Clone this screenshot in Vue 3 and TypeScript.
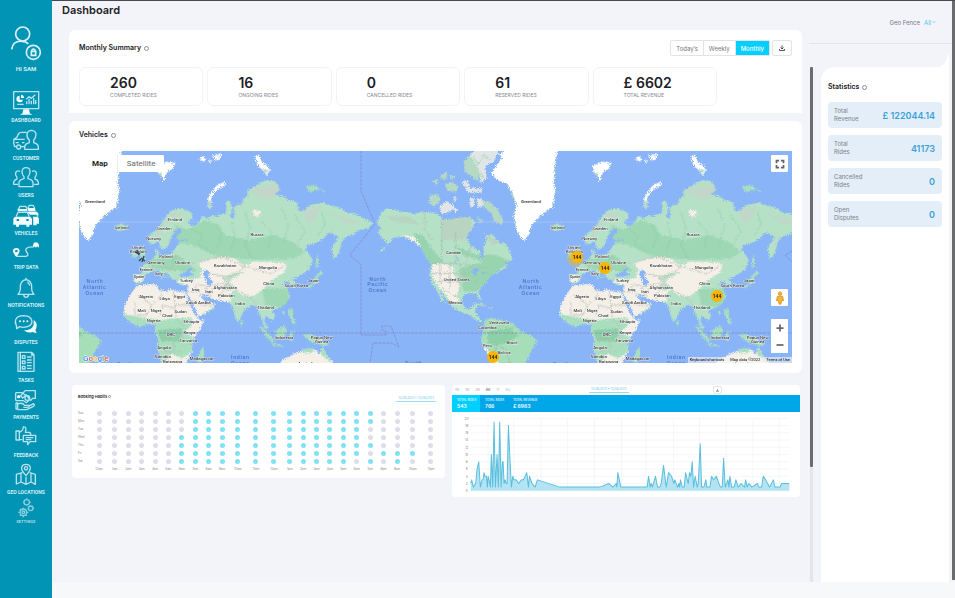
<script setup lang="ts">
import { ref } from 'vue'

interface NavItem {
  label: string
  box: string
  lines: string
  solid?: string
  kind?: 'short' | 'small'
}
interface MapLabel { x: number; y: number; text: string }

const ring = (x: number, y: number, r: number): string =>
  `M${x - r},${y}a${r},${r} 0 1 0 ${r * 2},0a${r},${r} 0 1 0 ${-r * 2},0Z`

const nav: NavItem[] = [
  {
    label: 'Dashboard',
    box: '33 273 90 75',
    lines: 'M41,275H116V326H41Z M80,313V304 M87,313V297 M94,313V302 M101,313V294 M107,313V300 M79,298L87,290L94,295L106,284 M52,313H71 M62,343H95',
    solid: 'M59,287A10,10 0 1 0 69,299H59Z M63,284A10,10 0 0 1 72,294H63Z M70,328H87L90,342H67Z',
  },
  {
    label: 'Customer',
    box: '33 387 90 75',
    lines: 'M74,440H62 M50,440H44Q39,430 42,417L50,413L56,401Q58,397 64,397H80 M42,418H74 M47,428H56 M66,428H73 '
      + ring(56, 441, 6)
      + ' M74,448V439Q76,431 88,428V421Q80,413 81,402Q84,391 95,391Q107,392 108,403Q108,414 101,421V428Q113,431 115,439V448Z',
  },
  {
    label: 'Users',
    box: '33 498 90 75',
    lines: 'M57,560V547Q59,539 72,536V530Q65,523 66,513Q68,503 78,503Q89,503 90,513Q91,523 84,530V536Q97,539 99,547V560Z M54,553H41V546Q43,539 51,537V532Q45,526 47,518Q51,510 60,514 M102,553H115V546Q113,539 105,537V532Q111,526 109,518Q105,510 96,514',
  },
  {
    label: 'Vehicles',
    box: '33 612 90 75',
    lines: 'M55,628L60,619H77L82,627 M84,624L88,616H99L104,624 M48,650L54,637H82L88,650 M86,638H108L114,650',
    solid: 'M53,627H82V634H53Z M83,624H105L107,634H85Z M40,656Q41,650 49,650H87Q96,651 96,659V674H88V680H79V674H57V680H48V674H40Z M50,657V663H57V657Z M79,657V663H86V657Z M99,650H112Q118,652 117,660V671H110V676H100Z M80,635H111L117,644H91Z',
  },
  {
    label: 'Trip Data',
    box: '33 24 90 75',
    lines: 'M51,79H76Q87,78 82,69Q74,60 80,55Q85,50 101,51',
    solid: 'M49,81Q38,69 39,62Q40,54 49,54Q58,54 59,63Q58,70 49,81Z M49,59A4,4 0 1 0 49,67A4,4 0 1 0 49,59Z M99,50Q98,38 108,37Q118,38 117,53L111,49L108,53Q103,48 99,50Z',
    kind: 'short',
  },
  {
    label: 'Notifications',
    box: '33 138 90 75',
    lines: 'M54,193Q62,186 61,169Q62,152 78,149Q94,152 95,169Q94,186 102,193Z M71,194Q72,202 78,202Q85,202 86,194 M78,149V143 M82,156Q88,160 89,167',
  },
  {
    label: 'Disputes',
    box: '33 249 90 75',
    lines: 'M49,286Q44,277 47,269Q52,257 71,257Q95,258 96,275Q95,290 72,292Q64,292 59,290L50,296Z',
    solid: 'M101,270Q111,276 110,289Q110,295 106,300L110,310L97,306Q83,311 72,301Q97,301 101,284Z ' + ring(60, 274, 3) + ring(71, 274, 3) + ring(82, 274, 3),
  },
  {
    label: 'Tasks',
    box: '33 363 90 75',
    lines: 'M54,367H61V424H54Z M61,367H95L102,374V424H61 M95,367V375H102 M67,377H75V385H67Z M67,393H75V401H67Z M67,409H75V417H67Z M81,381H95 M81,390H95 M81,398H95 M81,407H95 M81,415H95',
  },
  {
    label: 'Payments',
    box: '33 474 90 75',
    lines: 'M47,488H66L77,496 M48,512H71L79,518L87,511 M47,488V512 M75,482H106V505H98L91,512 M75,482L62,498L68,504L79,495L91,511 M48,519H53V537H48Z M53,522Q67,516 74,526H88Q90,532 80,532H70 M85,529L101,521Q106,525 99,530L80,539H53 ' + ring(82, 504, 7),
    solid: ring(56, 500, 5),
  },
  {
    label: 'Feedback',
    box: '33 588 90 75',
    lines: 'M48,603H58V630H48Z M58,607Q69,603 70,591Q77,589 78,598L76,607H89Q94,610 91,616 M58,629H67 M70,616H107V635H90L83,644V635H70Z M77,623H100 M77,629H94',
  },
  {
    label: 'Geo Locations',
    box: '33 699 90 75',
    lines: 'M78,737Q63,721 65,713Q66,703 78,703Q90,703 91,713Q92,721 78,737Z M67,728L49,733V762L63,756L78,763L93,756L106,763V733L89,728 M63,731V756 M78,740V763 M93,731V756 ' + ring(78, 715, 5),
  },
  {
    label: 'Settings',
    box: '33 801 90 66',
    lines: ring(70, 850, 10) + ring(70, 850, 4) + ring(80, 820, 8) + ring(92, 838, 7) + ' M70,836V840 M70,860V865 M55,850H60 M80,850H85 M60,840L63,843 M77,857L80,860 M60,860L63,857 M80,808V812 M69,820H72 M88,820H92 M99,838H102',
    kind: 'small',
  },
]

const summary = [
  { value: '260', label: 'COMPLETED RIDES' },
  { value: '16', label: 'ONGOING RIDES' },
  { value: '0', label: 'CANCELLED RIDES' },
  { value: '61', label: 'RESERVED RIDES' },
  { value: '£ 6602', label: 'TOTAL REVENUE' },
]
const periods = ['Today’s', 'Weekly', 'Monthly']
const period = ref('Monthly')
const mapType = ref('Map')
const fence = ref('All')

const stats = [
  { label: 'Total Revenue', value: '£ 122044.14' },
  { label: 'Total Rides', value: '41173' },
  { label: 'Cancelled Rides', value: '0' },
  { label: 'Open Disputes', value: '0' },
]

/* The world drawing repeats sideways; each half has its own origin */
const shifts = [-436, 0, 436]
const eastOrigin = -4
const westOrigin = 231

const eastLabels: MapLabel[] = [
  { x: 140, y: 252, text: 'Iceland' }, { x: 300, y: 229, text: 'Finland' }, { x: 267, y: 256, text: 'Sweden' },
  { x: 236, y: 285, text: 'Norway' }, { x: 190, y: 312, text: 'United' }, { x: 190, y: 324, text: 'Kingdom' },
  { x: 273, y: 339, text: 'Poland' }, { x: 243, y: 358, text: 'Germany' }, { x: 323, y: 358, text: 'Ukraine' },
  { x: 214, y: 377, text: 'France' }, { x: 251, y: 391, text: 'Italy' }, { x: 192, y: 399, text: 'Spain' },
  { x: 334, y: 412, text: 'Turkey' }, { x: 362, y: 439, text: 'Iraq' }, { x: 402, y: 445, text: 'Iran' },
  { x: 546, y: 274, text: 'Russia' }, { x: 450, y: 365, text: 'Kazakhstan' }, { x: 579, y: 373, text: 'Mongolia' },
  { x: 581, y: 419, text: 'China' }, { x: 664, y: 425, text: 'South Korea' }, { x: 716, y: 412, text: 'Japan' },
  { x: 451, y: 433, text: 'Afghanistan' }, { x: 454, y: 456, text: 'Pakistan' }, { x: 495, y: 481, text: 'India' },
  { x: 572, y: 492, text: 'Thailand' }, { x: 213, y: 459, text: 'Algeria' }, { x: 269, y: 464, text: 'Libya' },
  { x: 314, y: 459, text: 'Egypt' }, { x: 370, y: 477, text: 'Saudi Arabia' }, { x: 200, y: 500, text: 'Mali' },
  { x: 243, y: 500, text: 'Niger' }, { x: 317, y: 503, text: 'Sudan' }, { x: 277, y: 516, text: 'Chad' },
  { x: 236, y: 531, text: 'Nigeria' }, { x: 349, y: 535, text: 'Ethiopia' }, { x: 343, y: 566, text: 'Kenya' },
  { x: 288, y: 572, text: 'DRC' }, { x: 340, y: 590, text: 'Tanzania' }, { x: 267, y: 612, text: 'Angola' },
  { x: 263, y: 638, text: 'Namibia' }, { x: 293, y: 653, text: 'Botswana' }, { x: 380, y: 646, text: 'Madagascar' },
  { x: 627, y: 582, text: 'Indonesia' }, { x: 740, y: 583, text: 'Papua New' }, { x: 740, y: 595, text: 'Guinea' },
  { x: 695, y: 660, text: 'Australia' },
]
const eastSeas: MapLabel[] = [
  { x: 60, y: 415, text: 'North' }, { x: 59, y: 432, text: 'Atlantic' }, { x: 59, y: 449, text: 'Ocean' },
  { x: 152, y: 662, text: 'South' }, { x: 496, y: 642, text: 'Indian' }, { x: 496, y: 659, text: 'Ocean' },
]
const westLabels: MapLabel[] = [
  { x: 663, y: 173, text: 'Greenland' }, { x: 430, y: 328, text: 'Canada' }, { x: 440, y: 408, text: 'United States' },
  { x: 436, y: 476, text: 'Mexico' }, { x: 567, y: 536, text: 'Venezuela' }, { x: 532, y: 552, text: 'Colombia' },
  { x: 606, y: 597, text: 'Brazil' }, { x: 532, y: 606, text: 'Peru' }, { x: 582, y: 628, text: 'Bolivia' },
]
const westSeas: MapLabel[] = [
  { x: 203, y: 407, text: 'North' }, { x: 203, y: 424, text: 'Pacific' }, { x: 203, y: 441, text: 'Ocean' },
  { x: 311, y: 661, text: 'South' },
]
/* Keeps only the labels whose middle falls inside the map */
const visible = (list: MapLabel[], origin: number, shift: number): MapLabel[] =>
  list.filter((l) => {
    const x = origin + shift + l.x / 3
    return x > 12 && x < 701
  })
const clusters = [{ x: 498, y: 106 }, { x: 526, y: 117 }, { x: 638, y: 145 }, { x: 414, y: 206 }]

/* One string per day, one character per hour; 1 marks an hour with bookings */
const days = [
  { name: 'Sun', hours: '000000011111111111110000' },
  { name: 'Mon', hours: '000000011111111111110000' },
  { name: 'Tue', hours: '000000011111111111100000' },
  { name: 'Wed', hours: '000000111111111111100000' },
  { name: 'Thu', hours: '000000111111111111110000' },
  { name: 'Fri', hours: '000000111111111111101110' },
  { name: 'Sat', hours: '000000111111111111010100' },
]
const hourNames = Array.from({ length: 24 }, (_, h) => `${h % 12 === 0 ? 12 : h % 12}${h < 12 ? 'am' : 'pm'}`)
const isWide = (h: number): boolean => hourNames[h].length === 4

const series: [number, number][] = [
  [78, 2], [81, 3], [86, 1], [93, 2], [97, 6], [102, 8], [107, 1], [112, 3], [115, 3], [118, 5], [121, 4], [125, 4],
  [128, 1], [130, 4], [133, 3], [137, 1], [140, 10], [144, 1], [148, 19], [152, 1], [157, 10], [161, 1], [165, 19],
  [169, 1], [173, 8], [175, 8], [178, 2], [181, 3], [184, 2], [187, 2], [191, 18], [196, 8], [200, 1], [204, 4],
  [207, 3], [214, 3], [222, 2], [230, 3], [236, 3], [246, 5], [251, 1], [254, 4], [262, 2], [271, 1], [278, 3],
  [345, 1], [465, 1], [492, 2], [504, 1], [514, 2], [516, 1], [519, 5], [528, 1], [607, 1], [611, 4], [616, 1],
  [619, 2], [623, 1], [632, 4], [638, 1], [645, 1], [649, 2], [656, 7], [664, 1], [671, 5], [680, 4], [687, 2],
  [690, 3], [698, 1], [702, 2], [704, 1], [707, 3], [712, 1], [718, 1], [722, 5], [730, 2], [734, 5], [738, 4],
  [742, 8], [746, 1], [751, 4], [757, 1], [760, 2], [766, 13], [770, 1], [777, 1], [783, 3], [786, 1], [795, 1],
  [800, 4], [806, 3], [814, 4], [822, 2], [827, 1], [832, 1], [836, 9], [841, 1], [849, 3], [852, 1], [855, 4],
  [860, 1], [868, 1], [873, 3], [880, 1], [888, 2], [899, 1], [902, 3], [907, 1], [912, 2], [921, 1], [937, 2],
  [942, 1], [950, 1], [955, 4], [962, 3], [974, 1], [985, 3], [990, 1], [1003, 1], [1005, 1], [1010, 2], [1033, 2],
]
const yOf = (v: number): number => 347 - v * 10.85
const line = 'M' + series.map(([x, v]) => `${x},${yOf(v)}`).join('L')
const area = `${line}L1033,347L78,347Z`
const ticks = [0, 2, 4, 6, 8, 10, 12, 14, 16, 18, 20]
const gridX = [130, 207, 289, 368, 449, 530, 604, 686, 764, 844, 924, 1003]
const ranges = ['1W', '1M', '3M', '6M', '1Y', 'ALL']
const rangeOn = ref('6M')
const totals = [
  { label: 'TOTAL RIDES', value: '543' },
  { label: 'TOTAL RIDES', value: '766' },
  { label: 'TOTAL REVENUE', value: '£ 6963' },
]
</script>

<template>
  <div class="app">
    <aside class="sidebar">
      <div class="user">
        <svg class="avatar" viewBox="27 72 102 114" aria-hidden="true">
          <circle cx="68" cy="102" r="21" />
          <path d="M35 148Q38 122 66 124Q78 124 85 132" />
          <circle cx="100" cy="157" r="21" />
          <path d="M94 154H107V166H94ZM96 154V150Q100 144 105 150V154" />
        </svg>
        <span>HI SAM</span>
      </div>
      <nav>
        <ul>
          <li v-for="n in nav" :key="n.label" :class="n.kind">
            <a href="#">
              <svg :viewBox="n.box" aria-hidden="true">
                <path :d="n.lines" class="lines" />
                <path v-if="n.solid" :d="n.solid" class="solid" />
              </svg>
              <span>{{ n.label }}</span>
            </a>
          </li>
        </ul>
      </nav>
    </aside>

    <div class="page">
      <div class="body">
        <main>
          <h1>Dashboard</h1>

          <section class="panel summary">
            <header>
              <h2>Monthly Summary <i class="info"></i></h2>
              <div class="tools">
                <div class="segments">
                  <button v-for="p in periods" :key="p" type="button" :class="{ on: p === period }" @click="period = p">{{ p }}</button>
                </div>
                <button class="download" type="button" aria-label="Download">
                  <svg viewBox="0 0 12 12"><path d="M6 1V8M3 5L6 8L9 5M1 8V11H11V8" /></svg>
                </button>
              </div>
            </header>
            <div class="cards">
              <article v-for="s in summary" :key="s.label">
                <strong>{{ s.value }}</strong>
                <span>{{ s.label }}</span>
              </article>
            </div>
          </section>

          <section class="panel vehicles">
            <h2>Vehicles <i class="info"></i></h2>
            <div class="map">
              <svg class="world" viewBox="0 0 713 212" preserveAspectRatio="xMidYMid slice" aria-hidden="true">
                <defs>
                  <filter id="coast" x="-5%" y="-5%" width="110%" height="110%">
                    <feTurbulence type="fractalNoise" baseFrequency="0.28" numOctaves="3" seed="4" result="n" />
                    <feDisplacementMap in="SourceGraphic" in2="n" scale="16" xChannelSelector="R" yChannelSelector="G" />
                  </filter>
                  <clipPath id="euClip"><use href="#eurasia" /></clipPath>
                  <clipPath id="afClip"><use href="#africa" /></clipPath>
                  <clipPath id="naClip"><use href="#northam" /></clipPath>
                  <path id="eurasia" d="M175,387L200,387L203,378L195,368L205,360L218,352L228,345L238,335L243,325L240,316L247,312L252,320L250,330L262,332L275,330L290,325L297,315L303,305L312,300L310,292L325,288L340,285L335,281L308,285L305,275L318,262L322,255L312,250L300,258L292,270L286,282L282,298L270,312L262,315L254,302L250,288L238,297L224,295L218,280L225,268L245,255L262,232L275,210L292,195L315,190L335,195L350,205L353,220L338,230L350,242L365,240L375,225L385,212L395,222L410,212L425,215L440,208L450,208L455,190L452,175L460,165L468,175L470,200L465,215L475,222L480,205L475,190L485,180L500,178L505,160L520,150L515,138L545,120L575,105L605,112L616,135L600,150L630,155L640,165L665,170L672,200L690,195L705,180L745,173L767,182L790,186L817,203L835,205L850,212L895,235L880,250L850,255L838,268L812,275L800,290L792,325L776,345L770,310L782,290L790,275L765,262L735,288L712,298L695,300L692,315L708,335L712,355L700,375L685,385L670,395L652,402L660,412L665,425L655,428L645,415L635,408L622,415L638,430L645,455L635,475L615,490L595,492L592,500L600,510L595,525L580,520L572,510L568,530L578,545L576,555L565,540L560,520L550,500L545,485L530,480L515,490L502,505L492,532L482,520L475,495L468,478L455,470L430,467L405,460L392,450L380,445L395,470L420,476L415,492L390,507L366,516L355,490L340,465L335,447L340,432L340,420L320,422L305,412L302,402L292,405L283,392L270,382L262,378L275,398L266,394L252,380L240,376L225,382L212,388L208,405L195,415L178,412Z" />
                  <path id="africa" d="M185,422L215,418L245,418L250,432L275,440L285,432L310,440L330,440L338,455L350,490L365,515L375,525L390,524L375,552L355,580L350,600L352,620L336,645L332,670L265,670L255,640L248,610L250,580L240,560L242,542L225,535L190,545L165,530L145,510L148,485L165,450Z" />
                  <path id="northam" d="M200,235L212,205L230,190L265,198L310,206L345,200L380,205L400,225L440,220L480,215L495,230L490,245L470,275L480,300L510,320L513,340L522,335L520,310L530,285L525,270L550,270L570,295L585,290L600,320L607,345L580,355L595,362L575,375L555,385L540,395L530,410L515,425L505,440L516,465L508,466L500,445L480,445L460,450L455,470L465,490L480,492L490,480L502,480L495,500L505,515L518,530L505,530L480,510L455,502L430,490L415,470L400,450L388,430L398,455L408,475L395,468L380,435L365,415L358,385L365,360L350,340L335,310L310,288L280,275L250,280L215,320L205,322L237,297L220,285L205,265L212,250Z" />
                  <g id="east">
                    <use href="#eurasia" fill="#b5e2c7" />
                    <g clip-path="url(#euClip)">
                      <path fill="#97d4ae" d="M300,240L340,255L390,225L430,240L450,270L520,285L600,270L650,290L690,320L660,340L560,345L430,335L350,300L290,290ZM560,430L640,430L640,490L570,480ZM200,350L310,330L370,380L250,375Z" opacity=".8" />
                      <path fill="#c2d7c9" d="M520,135L620,115L610,150L580,165L545,150ZM530,190L560,200L550,222L530,212ZM680,200L740,180L720,220L700,235ZM760,200L850,230L820,240ZM245,260L290,205L340,200L285,225L240,290Z" />
                      <path fill="#f4efe7" d="M368,352L400,344L440,335L475,340L510,362L535,350L590,350L636,356L628,380L598,402L580,410L565,432L535,455L500,450L478,432L462,452L470,470L430,470L392,452L380,445L425,478L365,520L330,440L338,418L305,412L315,402L350,404L375,400L382,375ZM178,392L205,392L198,412L178,410ZM535,195L558,198L552,218L535,210Z" />
                      <path fill="#a5d9b9" d="M440,400L470,385L510,380L480,395L462,412ZM440,425L462,412L480,425L460,440Z" opacity=".7" />
                      <path fill="none" stroke="#8fcfa9" stroke-width="2" d="M345,250L380,270L370,300L410,320M420,235L440,270L425,310M470,230L480,280L465,320M510,200L525,250L510,300L530,340M560,230L590,260L580,310M620,190L640,240L625,300M660,210L690,260L665,300M740,200L750,240L730,270M255,335L260,370M300,330L290,370" />
                      <path fill="none" stroke="#b8b8b4" stroke-width="2" d="M370,352L440,335L510,365L590,385L636,357M510,365L470,395L440,392L395,385M440,392L455,415L480,432M395,425L430,418L455,415L430,467M405,458L412,430M480,432L530,458L545,485M545,485L590,490M228,345L235,380M262,332L265,365L300,375M300,325L310,350L360,355M335,440L365,440L362,420L390,420L400,455M340,465L380,480L415,480" />
                    </g>
                    <use href="#africa" fill="#f4efe7" />
                    <g clip-path="url(#afClip)">
                      <path fill="#a9dfbe" d="M140,505L200,518L260,525L300,520L350,518L350,540L330,560L360,580L350,620L320,640L290,625L270,650L240,640L230,560L150,545Z" />
                      <path fill="#8dcfa7" d="M245,555L320,550L315,590L260,590Z" />
                      <path fill="none" stroke="#b8b8b4" stroke-width="2" d="M190,450L230,480L262,450L255,430M230,480L215,510M262,480L300,490L295,440M300,480H345M300,490L305,525L330,545M262,480L255,515M180,470V510H215M250,580H290L300,610M320,550V580L350,600M265,620H320" />
                    </g>
                    <path fill="#8ab4f8" d="M312,388L330,382L345,368L352,374L345,382L362,392L340,394L318,396ZM388,376L402,376L400,394L412,408L405,426L396,418L392,402L384,388ZM332,442L340,450L368,505L365,516L350,492ZM372,445L385,455L398,466L390,470Z" />
                    <path fill="#a9dfbe" d="M120,243L140,235L158,243L150,255L130,258ZM192,325L198,300L210,305L204,320L214,332L210,342L192,345L200,335ZM172,322L188,318L186,336L172,338ZM372,622L385,605L388,628L377,655L367,650ZM552,540L575,558L600,590L590,592L568,568ZM600,560L625,540L638,555L625,580L605,578ZM590,594L625,600L622,605L590,600ZM645,560L662,558L650,570L656,590L646,585ZM682,568L700,566L730,578L765,600L745,602L705,590ZM642,490L655,492L652,510L664,535L654,538L642,512ZM622,498L632,503L625,510ZM497,525L505,535L498,545ZM694,426L715,415L722,392L736,378L745,384L730,396L728,412L706,428ZM722,340L730,330L730,362L724,370ZM692,125L720,120L735,132L705,142ZM740,132L752,138L745,142ZM255,398L265,398L262,404Z" />
                    <path fill="#f4efe7" d="M610,670L620,645L650,630L675,620L695,609L720,613L735,628L742,604L755,630L772,650L778,670Z" />
                    <path fill="#a9dfbe" d="M675,622L695,609L718,613L710,624ZM738,628L742,604L755,630L770,655L752,640Z" />
                    <path fill="#fff" d="M245,62L275,50L302,55L292,72L276,82L266,112L258,90L248,85ZM370,40L385,34L395,42L385,50ZM400,44L408,46L404,54ZM412,32L440,28L436,40L420,46ZM540,35L552,28L560,50L572,58L585,75L576,90L558,70L550,65ZM397,180L402,150L425,122L448,110L452,118L424,136L408,158L411,188L402,192Z" />
                    <path fill="#b5d9c4" d="M248,85L262,82L260,94ZM560,72L582,76L576,86ZM397,168L407,165L411,188L400,192Z" />
                  </g>
                  <g id="west">
                    <use href="#northam" fill="#b5e2c7" />
                    <g clip-path="url(#naClip)">
                      <path fill="#92d1aa" d="M310,265L340,270L365,310L400,350L362,360L330,310ZM430,300L500,330L560,330L600,350L560,380L500,440L460,440L450,370L520,350L460,330Z" opacity=".8" />
                      <path fill="#b9d4c1" d="M390,222L480,215L490,250L460,285L400,285ZM525,268L570,290L585,295L545,300ZM230,212L300,215L330,240L250,230Z" />
                      <path fill="#f4efe7" d="M365,360L395,355L430,365L435,395L450,420L440,450L450,480L425,470L390,430L368,400ZM275,268L310,275L335,305L310,290Z" />
                      <path fill="none" stroke="#aab9b0" stroke-width="2" d="M345,200V255L370,290M365,355H460L500,370L540,365M395,230V350M437,260V355M485,300L465,355M395,430L440,455M390,355V420M420,355V430M450,355V440M365,385H480M370,410H500" />
                      <path fill="#8ab4f8" d="M485,375L500,368L508,376L498,380L502,392L495,392ZM512,385L528,378L526,386ZM440,330L446,345L442,348Z" />
                    </g>
                    <path fill="#a6deba" d="M525,525L545,518L575,525L610,535L630,558L670,575L681,590L665,615L655,640L630,670L555,670L550,640L525,615L513,585L520,555Z" />
                    <path fill="#8dcfa7" d="M530,560L600,550L625,570L600,590L560,600L535,595Z" />
                    <path fill="#f4efe7" d="M517,590L532,615L556,635L575,670H555L548,642L524,615Z" />
                    <path fill="none" stroke="#9db8a8" stroke-width="2" d="M525,560L560,565L570,540L610,550M560,600L590,615L600,660M535,600L560,600L550,635" />
                    <path fill="#b5d9c4" d="M490,475L515,474L530,482L505,482ZM532,486L548,488L542,493ZM358,150L385,148L392,165L375,185L358,175ZM365,108L385,104L380,120ZM390,90L412,80L410,100L395,104ZM420,90L435,95L425,105ZM405,120L425,112L445,125L440,140L415,138ZM460,50L490,20L510,55L505,110L480,90L465,80ZM515,165L540,170L565,195L580,225L575,240L550,228L545,205L520,185ZM500,215L520,225L512,235Z" />
                    <path fill="#e0e5e6" d="M480,30L500,12L570,12L550,50L525,65L530,100L512,115L505,70ZM388,185L410,168L425,178L435,190L410,205L392,205ZM430,150L440,160L432,172ZM455,110L470,105L480,128L516,130L515,142L475,144ZM478,160L492,158L495,180L482,188ZM500,160L515,162L520,180L505,190ZM430,185L445,195L435,205Z" />
                    <path fill="none" stroke="#b5d9c4" stroke-width="4" d="M490,35L505,60L520,30L540,45M510,80L520,100" />
                    <path fill="#fff" d="M545,85L560,60L575,40L568,28L600,10L745,10L735,60L732,110L736,140L728,185L700,205L680,225L665,240L655,270L645,287L630,275L618,250L612,210L620,180L605,140L590,115L560,105Z" />
                    <path fill="none" stroke="#b5d9c4" stroke-width="3" stroke-dasharray="7 5" d="M592,122L606,142L618,180L612,212L618,250L630,275M735,60L732,110L736,140L728,185L700,205L680,225" />
                  </g>
                </defs>
                <rect width="713" height="212" fill="#8ab4f8" />
                <path d="M0 71H713" stroke="#9cc0fb" />
                <g v-for="shift in shifts" :key="shift" :transform="`translate(${shift} 0)`">
                  <g transform="translate(231 -6) scale(.33333)">
                    <use href="#west" filter="url(#coast)" />
                    <text v-for="l in visible(westLabels, westOrigin, shift)" :key="l.text" :x="l.x" :y="l.y" class="place">{{ l.text }}</text>
                    <text v-for="(l, i) in visible(westSeas, westOrigin, shift)" :key="i" :x="l.x" :y="l.y" class="sea">{{ l.text }}</text>
                  </g>
                </g>
                <g v-for="shift in shifts" :key="'e' + shift" :transform="`translate(${shift} 0)`">
                  <g transform="translate(-4 -6) scale(.33333)">
                    <use href="#east" filter="url(#coast)" />
                    <text v-for="l in visible(eastLabels, eastOrigin, shift)" :key="l.text" :x="l.x" :y="l.y" class="place">{{ l.text }}</text>
                    <text v-for="(l, i) in visible(eastSeas, eastOrigin, shift)" :key="i" :x="l.x" :y="l.y" class="sea">{{ l.text }}</text>
                  </g>
                </g>
                <path class="dateline" d="M282 0V40L296 73L271 104L282 114V184H307V180L303 179V175H312L320 196L312 192H294L291 212M713 100L706 104L713 111M0 182H713" />
                <path fill="none" stroke="#3a4650" stroke-width="1.4" d="M56 101L61 103M58 99L60 104M62 107L66 110M65 105L63 111M60 110L62 108" />
                <circle cx="496" cy="108" r="8" fill="#f7b500" opacity=".35" />
                <g v-for="c in clusters" :key="c.x">
                  <circle :cx="c.x" :cy="c.y" r="6" fill="#fbb400" />
                  <text :x="c.x" :y="c.y + 2" class="count">144</text>
                </g>
                <text x="4" y="210" class="logo"><tspan fill="#4285f4">G</tspan><tspan fill="#ea4335">o</tspan><tspan fill="#fbbc05">o</tspan><tspan fill="#4285f4">g</tspan><tspan fill="#34a853">l</tspan><tspan fill="#ea4335">e</tspan></text>
              </svg>
              <div class="types">
                <button v-for="t in ['Map', 'Satellite']" :key="t" type="button" :class="{ on: t === mapType }" @click="mapType = t">{{ t }}</button>
              </div>
              <div class="controls">
                <button type="button" aria-label="Full screen">
                  <svg viewBox="0 0 16 16"><path d="M4 7V4H7M9 4H12V7M12 9V12H9M7 12H4V9" /></svg>
                </button>
                <span class="grow"></span>
                <button type="button" aria-label="Street view">
                  <svg viewBox="0 0 16 16" class="man"><circle cx="8" cy="3" r="2" /><path d="M5 6H11L12 11H10L9 15H7L6 11H4Z" /></svg>
                </button>
                <div class="zoom">
                  <button type="button" aria-label="Zoom in"><svg viewBox="0 0 16 16"><path d="M4 8H12M8 4V12" /></svg></button>
                  <button type="button" aria-label="Zoom out"><svg viewBox="0 0 16 16"><path d="M4 8H12" /></svg></button>
                </div>
              </div>
              <div class="legal"><a href="#">Keyboard shortcuts</a><span>Map data ©2022</span><a href="#">Terms of Use</a></div>
            </div>
          </section>

          <div class="charts">
            <section class="panel habits">
              <header>
                <h3>Booking Habits <i class="info"></i></h3>
                <span class="dates">12/08/2021 ~ 12/08/2022</span>
              </header>
              <table>
                <colgroup>
                  <col class="day" />
                  <col v-for="(h, i) in hourNames" :key="h" :class="{ wide: isWide(i) }" />
                </colgroup>
                <tbody>
                  <tr v-for="d in days" :key="d.name">
                    <th scope="row">{{ d.name }}</th>
                    <td v-for="(c, i) in d.hours" :key="i"><i class="dot" :class="{ hit: c === '1' }"></i></td>
                  </tr>
                </tbody>
                <tfoot>
                  <tr>
                    <td></td>
                    <td v-for="h in hourNames" :key="h">{{ h }}</td>
                  </tr>
                </tfoot>
              </table>
            </section>

            <section class="panel rides">
              <header>
                <div class="ranges">
                  <button v-for="r in ranges" :key="r" type="button" :class="{ on: r === rangeOn }" @click="rangeOn = r">{{ r }}</button>
                </div>
                <span class="dates">12/08/2021 ~ 12/08/2022</span>
                <button class="download" type="button" aria-label="Download chart">
                  <svg viewBox="0 0 12 12"><path d="M6 1V8M3 5L6 8L9 5M1 8V11H11V8" /></svg>
                </button>
              </header>
              <div class="totals">
                <div v-for="(t, i) in totals" :key="i" :class="{ on: i === 0 }">
                  <span>{{ t.label }}</span>
                  <strong>{{ t.value }}</strong>
                </div>
              </div>
              <svg class="plot" viewBox="22 111 1043 254" role="img" aria-label="Rides">
                <path v-for="t in ticks" :key="t" :d="`M78,${yOf(t)}H1033`" class="grid" />
                <path v-for="x in gridX" :key="x" :d="`M${x},130V347`" class="grid" />
                <text v-for="t in ticks" :key="t" x="66" :y="yOf(t) + 4" class="tick">{{ t }}</text>
                <path :d="area" class="area" />
                <path :d="line" class="line" />
              </svg>
            </section>
          </div>
        </main>

        <div class="rail"><i></i></div>

        <div class="right">
          <div class="fence">
            <label for="fence">Geo Fence</label>
            <select id="fence" v-model="fence"><option>All</option></select>
            <svg viewBox="0 0 6 6" aria-hidden="true"><path d="M1 2L3 4L5 2" /></svg>
          </div>
          <section class="statistics">
            <h2>Statistics <i class="info"></i></h2>
            <dl>
              <div v-for="s in stats" :key="s.label">
                <dt>{{ s.label }}</dt>
                <dd>{{ s.value }}</dd>
              </div>
            </dl>
          </section>
        </div>
        <div class="edge"></div>
      </div>
      <footer></footer>
    </div>
  </div>
</template>

<style>
body {
  background: #f7f8fa;
}
</style>

<style scoped>
* {
  box-sizing: border-box;
  margin: 0;
  padding: 0;
}
.app {
  display: flex;
  min-height: 100vh;
  font-family: Inter, "Liberation Sans", sans-serif;
  color: #1d2025;
}
button,
select {
  border: 0;
  background: none;
  font: inherit;
  color: inherit;
  cursor: pointer;
}
svg {
  display: block;
}

/* Sidebar */
.sidebar {
  width: 52px;
  flex: none;
  background: #0294b5;
  color: #d5eff6;
  font: 700 5px/8px Roboto, "Liberation Sans", sans-serif;
  text-align: center;
  text-transform: uppercase;
}
.user {
  height: 87px;
  padding-top: 24px;
  display: flex;
  flex-direction: column;
  align-items: center;
  gap: 3px;
  font-size: 6px;
}
.avatar {
  width: 34px;
  height: 38px;
  fill: none;
  stroke: #d9f1f7;
  stroke-width: 5;
}
.sidebar ul {
  list-style: none;
}
.sidebar li {
  height: 37px;
}
.sidebar li:nth-child(even) {
  height: 38px;
}
.sidebar li.short {
  height: 34px;
}
.sidebar li.small {
  height: 30px;
}
.sidebar a {
  height: 100%;
  display: flex;
  flex-direction: column;
  align-items: center;
  justify-content: flex-end;
  color: inherit;
  text-decoration: none;
  white-space: nowrap;
}
.sidebar a svg {
  width: 30px;
  height: 25px;
  overflow: visible;
}
.sidebar .small svg {
  height: 22px;
}
.sidebar .small {
  font-size: 4px;
  opacity: 0.75;
}
.lines {
  fill: none;
  stroke: #b9e3ee;
  stroke-width: 4;
  stroke-linejoin: round;
}
.solid {
  fill: #f2fbfd;
  fill-rule: evenodd;
}

/* Page frame */
.page {
  flex: 1;
  min-width: 0;
  display: flex;
  flex-direction: column;
  border-top: 1px solid #47494d;
}
.body {
  flex: 1;
  display: flex;
  background: #f3f4f9;
}
footer {
  height: 16px;
  background: #f7f8fa;
}
main {
  flex: 1;
  min-width: 0;
  padding: 0 8px 0 17px;
}
h1 {
  height: 29px;
  margin-left: -7px;
  font-size: 11px;
  line-height: 18px;
  font-weight: 600;
}
h2 {
  display: flex;
  align-items: center;
  gap: 3px;
  font-size: 7px;
  line-height: 12px;
  font-weight: 600;
}
.info {
  width: 5px;
  height: 5px;
  border: 1px solid #8a8d92;
  border-radius: 50%;
}
.panel {
  background: #fff;
  border-radius: 6px;
}

/* Monthly summary */
.summary {
  padding: 10px 10px 7px;
  border-radius: 6px 6px 0 0;
}
.summary header {
  display: flex;
  align-items: center;
  justify-content: space-between;
  margin-bottom: 11px;
}
.tools {
  display: flex;
  gap: 2px;
  font-size: 6px;
  color: #74777c;
}
.segments {
  display: flex;
  border: 1px solid #e2e3e6;
  border-radius: 2px;
}
.segments button {
  height: 14px;
  padding: 0 5px;
}
.segments button + button {
  border-left: 1px solid #e2e3e6;
}
.segments .on {
  background: #00cfff;
  color: #fff;
  font-weight: 500;
}
.download {
  width: 20px;
  display: grid;
  place-items: center;
  border: 1px solid #e2e3e6;
  border-radius: 2px;
}
.download svg {
  width: 6px;
  height: 6px;
  fill: none;
  stroke: #555;
  stroke-width: 2;
}
.cards {
  width: 92%;
  max-width: 638px;
  display: grid;
  grid-template-columns: repeat(5, 1fr);
  gap: 4px;
}
.cards article {
  display: flex;
  flex-direction: column;
  height: 39px;
  padding: 6px 0 0 30px;
  border: 1px solid #f2f3f5;
  border-radius: 6px;
}
.cards strong {
  font-size: 14px;
  line-height: 17px;
  font-weight: 600;
}
.cards span {
  font-size: 5px;
  line-height: 8px;
  color: #85888d;
}

/* Map */
.vehicles {
  margin-top: 8px;
  padding: 8px 10px 10px;
}
.map {
  position: relative;
  margin-top: 10px;
}
.world {
  width: 100%;
  height: 212px;
}
.place {
  font: 500 13px Roboto, sans-serif;
  text-anchor: middle;
  fill: #333;
  stroke: #fff;
  stroke-width: 2;
  paint-order: stroke;
}
.sea {
  font: 500 16px Roboto, sans-serif;
  letter-spacing: 2px;
  text-anchor: middle;
  fill: #4878cc;
}
.dateline {
  fill: none;
  stroke: #7d7fb8;
  stroke-dasharray: 3 1;
  stroke-width: 0.6;
}
.count {
  font: 700 5px Roboto, sans-serif;
  text-anchor: middle;
  fill: #222;
}
.logo {
  font: 500 8px Roboto, sans-serif;
  stroke: #fff;
  stroke-width: 1;
  paint-order: stroke;
}
.types {
  position: absolute;
  left: 4px;
  top: 4px;
  display: flex;
  background: #fff;
  border-radius: 1px;
  font: 400 8px/17px Roboto, sans-serif;
  color: #666;
}
.types button {
  padding: 0 9px;
}
.types .on {
  font-weight: 700;
  color: #222;
  border-right: 1px solid #eee;
}
.controls {
  position: absolute;
  top: 4px;
  right: 4px;
  bottom: 10px;
  display: flex;
  flex-direction: column;
  gap: 13px;
}
.grow {
  flex: 1;
}
.controls button {
  width: 17px;
  height: 17px;
  display: grid;
  place-items: center;
  background: #fff;
  border-radius: 1px;
}
.controls svg {
  width: 14px;
  height: 14px;
  fill: none;
  stroke: #666;
  stroke-width: 2;
}
.controls .man {
  fill: #f5b53a;
  stroke: #d9962a;
  stroke-width: 1;
}
.zoom {
  display: flex;
  flex-direction: column;
  background: #fff;
}
.legal {
  position: absolute;
  right: 0;
  bottom: 0;
  display: flex;
  gap: 6px;
  padding: 0 2px;
  background: rgba(245, 245, 245, 0.6);
  font: 400 4px/6px Roboto, sans-serif;
  color: #000;
}
.legal a {
  color: inherit;
  text-decoration: none;
}

/* Lower charts */
.charts {
  display: grid;
  grid-template-columns: 373fr 348fr;
  align-items: start;
  gap: 7px;
  margin-top: 12px;
  padding: 0 2px 0 3px;
}
.charts .panel {
  border-radius: 4px;
}
.charts header {
  display: flex;
  align-items: center;
  justify-content: space-between;
}
.habits {
  padding: 6px 5px 5px 6px;
}
.habits header {
  height: 11px;
  margin-bottom: 7px;
  padding-right: 4px;
  align-items: flex-end;
}
h3 {
  display: flex;
  align-items: center;
  gap: 1px;
  font-size: 4px;
  line-height: 11px;
  font-weight: 600;
}
h3 .info {
  width: 3px;
  height: 3px;
}
.dates {
  padding: 0 2px;
  border-bottom: 1px solid #9cdbe9;
  font-size: 3px;
  line-height: 5px;
  color: #5cc9e4;
}
table {
  width: 100%;
  table-layout: fixed;
  border-collapse: collapse;
  font-size: 3px;
  line-height: 4px;
  color: #888;
}
col.day {
  width: 12px;
}
col.wide {
  width: 5%;
}
tr {
  height: 8px;
}
th {
  font-weight: 400;
  text-align: left;
}
td {
  text-align: center;
}
.dot {
  display: block;
  width: 5px;
  height: 5px;
  margin: 0 auto;
  border-radius: 50%;
  background: #dddeea;
}
.dot.hit {
  background: #80e2f3;
}
.rides {
  overflow: hidden;
}
.rides header {
  height: 10px;
  padding-right: 78px;
}
.ranges {
  display: flex;
  gap: 6px;
  padding-left: 3px;
  font-size: 3px;
  color: #aaa;
}
.ranges .on {
  color: #555;
}
.rides .dates {
  margin: 0 auto 0 78px;
}
.rides .download {
  width: 9px;
  height: 8px;
}
.rides .download svg {
  width: 3px;
  height: 3px;
}
.totals {
  display: flex;
  background: #00a7e8;
  color: #fff;
}
.totals div {
  display: flex;
  flex-direction: column;
  height: 17px;
  min-width: 27px;
  padding: 3px 4px 3px 5px;
}
.totals .on {
  background: #00cfff;
}
.totals span {
  font-size: 3px;
  line-height: 5px;
  font-weight: 500;
}
.totals strong {
  font-size: 5px;
  line-height: 7px;
  font-weight: 600;
}
.plot {
  width: 100%;
}
.grid {
  stroke: #f0f1f3;
  stroke-width: 2;
}
.tick {
  font-size: 9px;
  text-anchor: middle;
  fill: #777;
}
.area {
  fill: #b5e3f4;
}
.line {
  fill: none;
  stroke: #58bfdc;
  stroke-width: 3;
  stroke-linejoin: round;
}

/* Right column */
.rail {
  width: 3px;
  margin-top: 66px;
  background: #e4e5ea;
}
.rail i {
  display: block;
  width: 100%;
  height: 400px;
  background: #6b6c70;
  border-radius: 1px;
}
.right {
  width: 139px;
  display: flex;
  flex-direction: column;
}
.fence {
  height: 43px;
  margin-left: -4px;
  padding-right: 16px;
  display: flex;
  align-items: center;
  justify-content: flex-end;
  border-bottom: 1px solid #e2e4e8;
  font-size: 6px;
  color: #74777c;
}
.fence select {
  appearance: none;
  width: 8px;
  margin-left: 4px;
  color: #4fc4e8;
}
.fence svg {
  width: 4px;
  height: 4px;
  fill: none;
  stroke: #4fc4e8;
}
.statistics {
  position: relative;
  flex: 1;
  margin: 23px 3px 0 8px;
  padding: 14px 7px 0;
  background: #fff;
  border-radius: 14px 0 0 0;
}
.statistics::before {
  content: "";
  position: absolute;
  right: 0;
  bottom: 100%;
  width: 14px;
  height: 12px;
  background: radial-gradient(circle at 0 0, transparent 12px, #fff 13px);
}
.statistics dl {
  display: grid;
  gap: 7px;
  margin-top: 9px;
}
.statistics dl div {
  display: flex;
  align-items: center;
  justify-content: space-between;
  height: 26px;
  padding: 0 7px 0 6px;
  background: #e3eef8;
  border-radius: 4px;
}
.statistics dt {
  width: 30px;
  font-size: 6px;
  line-height: 8px;
  color: #7c8187;
}
.statistics dd {
  font-size: 9px;
  font-weight: 600;
  color: #3ba1d8;
  white-space: nowrap;
}
.edge {
  width: 3px;
  margin-bottom: 2px;
  background: #6b6c70;
}
</style>
